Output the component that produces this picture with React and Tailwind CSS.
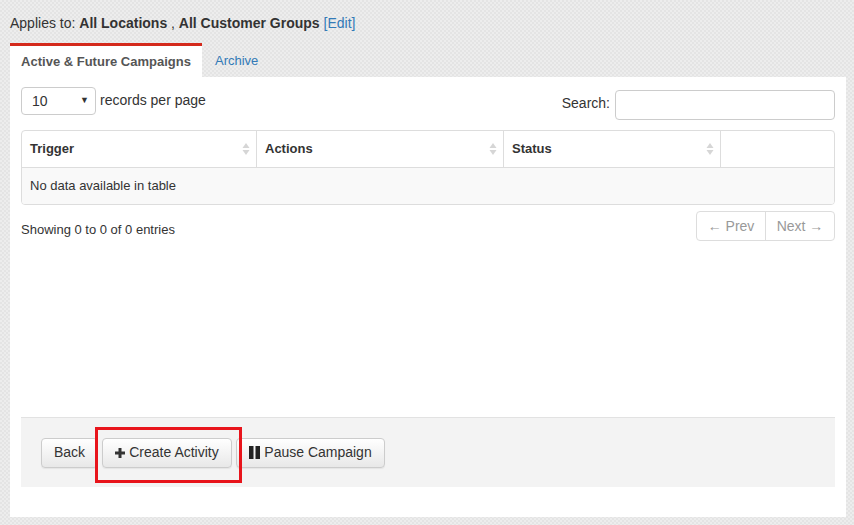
import React from "react";

function SortIcon() {
  return (
    <svg width="8" height="14" viewBox="0 0 8 14" className="shrink-0">
      <path d="M4 1 L7.5 6 L0.5 6 Z" fill="#d6d6d6" />
      <path d="M4 13 L7.5 8 L0.5 8 Z" fill="#d6d6d6" />
    </svg>
  );
}

function Btn({ children, className = "" }) {
  return (
    <button
      className={`h-[30px] px-2 rounded-[4px] border border-[#ccc] bg-gradient-to-b from-white to-[#e8e8e8] text-[14px] text-[#333] whitespace-nowrap flex items-center gap-[4px] shadow-[0_1px_1px_rgba(0,0,0,0.06)] ${className}`}
    >
      {children}
    </button>
  );
}

export default function App() {
  const columns = [
    { name: "Trigger", w: "w-[235px]" },
    { name: "Actions", w: "w-[247px]" },
    { name: "Status", w: "w-[217px]" },
  ];

  return (
    <div
      className="min-h-[525px] w-[854px] bg-[repeating-conic-gradient(#e4e4e4_0_25%,#ededed_0_50%)] bg-[length:4px_4px] text-[#333] font-['Liberation_Sans',Arial,sans-serif] pt-[13px] px-[10px]"
    >
      <div className="text-[14px] leading-[20px]">
        Applies to: <b>All Locations</b> , <b>All Customer Groups</b>{" "}
        <a className="text-[#337ab7]">[Edit]</a>
      </div>

      {/* tabs */}
      <div className="flex mt-[10px] h-[34px]">
        <div className="w-[192px] bg-white border-t-[3px] border-[#d42a1c] flex items-center justify-center text-[13px] font-bold text-[#555]">
          Active &amp; Future Campaigns
        </div>
        <div className="px-[13px] flex items-center text-[13px] text-[#337ab7] pt-[1px]">
          Archive
        </div>
      </div>

      {/* panel */}
      <div className="w-[836px] bg-white px-[11px] pb-[30px]">
        <div className="h-[340px] pt-[10px]">
          <div className="flex justify-between">
            <div className="flex items-start gap-[4px] text-[14px]">
              <div className="w-[75px] h-[28px] border border-[#ccc] rounded-[4px] flex items-center justify-between pl-[10px] pr-[6px]">
                <span>10</span>
                <span className="text-[9px] text-[#333]">▼</span>
              </div>
              <span className="leading-[26px]">records per page</span>
            </div>
            <div className="flex items-center gap-[5px] text-[14px] mt-[3px]">
              <span className="-mt-[3px]">Search:</span>
              <div className="w-[220px] h-[30px] border border-[#ccc] rounded-[4px]" />
            </div>
          </div>

          {/* table */}
          <div className="mt-[10px] border border-[#ddd] rounded-[4px] overflow-hidden">
            <div className="flex h-[37px] border-b border-[#ddd] text-[13px] font-bold">
              {columns.map((c) => (
                <div
                  key={c.name}
                  className={`${c.w} border-r border-[#ddd] flex items-center justify-between pl-[8px] pr-[6px]`}
                >
                  <span>{c.name}</span>
                  <SortIcon />
                </div>
              ))}
              <div className="flex-1" />
            </div>
            <div className="h-[36px] bg-[#f9f9f9] flex items-center pl-[8px] text-[13px]">
              No data available in table
            </div>
          </div>

          <div className="flex justify-between items-start mt-[6px]">
            <div className="text-[13px] mt-[9px]">Showing 0 to 0 of 0 entries</div>
            <div className="flex h-[30px] border border-[#ddd] rounded-[4px] text-[14px] text-[#999]">
              <div className="w-[69px] flex items-center justify-center border-r border-[#ddd]">
                ← Prev
              </div>
              <div className="w-[68px] flex items-center justify-center">Next →</div>
            </div>
          </div>
        </div>

        {/* footer */}
        <div className="relative h-[70px] bg-[#f3f3f3] border-t border-[#e2e2e2] flex items-center gap-[4px] pl-[20px]">
          <Btn className="w-[57px] justify-center">Back</Btn>
          <Btn className="w-[130px] justify-center">
            <svg width="10" height="10" viewBox="0 0 10 10">
              <path d="M3.5 0h3v3.5H10v3H6.5V10h-3V6.5H0v-3h3.5z" fill="#333" />
            </svg>
            Create Activity
          </Btn>
          <Btn className="w-[149px] justify-center">
            <svg width="11" height="13" viewBox="0 0 11 13">
              <rect x="0" y="0" width="4.5" height="13" fill="#222" />
              <rect x="6.5" y="0" width="4.5" height="13" fill="#222" />
            </svg>
            Pause Campaign
          </Btn>
          <div className="absolute left-[74px] top-[9px] w-[147px] h-[56px] border-[3px] border-[#e8141b]" />
        </div>
      </div>
    </div>
  );
}
